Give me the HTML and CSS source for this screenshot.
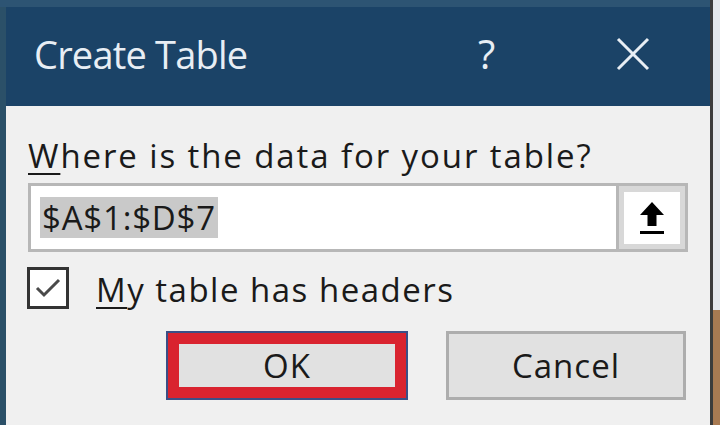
FILE: index.html
```html
<!DOCTYPE html>
<html>
<head>
<meta charset="utf-8">
<link rel="stylesheet" href="styles.css">
</head>
<body>
<div class="screen">
  <div class="edge-left"></div>
  <div class="dialog">
    <div class="top-strip"></div>
    <div class="titlebar">
      <div class="title">Create Table</div>
      <div class="help">?</div>
      <div class="close">
        <svg width="34" height="34" viewBox="0 0 34 34"><path d="M2 2 L32 32 M32 2 L2 32" stroke="#e8eef4" stroke-width="3" fill="none"/></svg>
      </div>
    </div>
    <div class="content">
      <div class="label"><u>W</u>here is the data for your table?</div>
      <div class="range">
        <div class="field"><span class="sel">$A$1:$D$7</span></div>
        <div class="collapse">
          <div class="collapse-inner">
            <svg width="30" height="40" viewBox="0 0 30 40"><path d="M15 4 L27 17 L19.5 17 L19.5 28 L10.5 28 L10.5 17 L3 17 Z" fill="#000"/><rect x="3" y="33" width="24" height="3" fill="#000"/></svg>
          </div>
        </div>
      </div>
      <div class="check-row">
        <div class="checkbox">
          <svg width="36" height="36" viewBox="0 0 36 36"><path d="M7 18 L14 25 L29 10" stroke="#4a4a4a" stroke-width="3" fill="none"/></svg>
        </div>
        <div class="check-label"><u>M</u>y table has headers</div>
      </div>
      <div class="buttons">
        <div class="btn ok"><span>OK</span></div>
        <div class="btn cancel"><span>Cancel</span></div>
      </div>
    </div>
  </div>
  <div class="edge-dark"></div>
  <div class="edge-right">
    <div class="er-top"></div>
    <div class="er-bottom"></div>
  </div>
</div>
</body>
</html>
```
FILE: styles.css
```css
html, body {
  margin: 0;
  padding: 0;
  width: 720px;
  height: 425px;
  overflow: hidden;
  background: #f0f0f0;
  font-family: "Open Sans", "Noto Sans", sans-serif;
}
.screen {
  display: flex;
  width: 720px;
  height: 425px;
}
.edge-left {
  width: 6px;
  background: #2b5068;
}
.dialog {
  flex: 1;
  display: flex;
  flex-direction: column;
  background: #f0f0f0;
}
.top-strip {
  height: 7px;
  background: #2d5473;
  margin-left: -6px;
}
.titlebar {
  height: 99px;
  background: #1b4367;
  display: flex;
  align-items: center;
  color: #e8eef4;
}
.title {
  font-size: 38px;
  padding-left: 28px;
  flex: 1;
  letter-spacing: -0.8px;
  padding-bottom: 6px;
}
.help {
  font-size: 40px;
  width: 30px;
  margin-right: 108px;
  padding-bottom: 6px;
}
.close {
  width: 34px;
  height: 34px;
  margin-right: 60px;
  margin-bottom: 6px;
}
.content {
  flex: 1;
  padding: 28px 0 0 22px;
  color: #1a1a1a;
}
.label {
  font-size: 33px;
  line-height: 44px;
  letter-spacing: 1.9px;
}
.label u, .check-label u {
  text-decoration-thickness: 2px;
  text-underline-offset: 5px;
}
.range {
  display: flex;
  width: 660px;
  height: 69px;
  margin-top: 5px;
  box-sizing: border-box;
  background: #b7b7b7;
  padding: 3px;
}
.field {
  flex: 1;
  background: #fff;
  display: flex;
  align-items: center;
  padding-left: 9px;
}
.sel {
  background: #c9c9c9;
  font-size: 33px;
  line-height: 41px;
  padding: 0 2px;
  letter-spacing: 0.8px;
  color: #1a1a1a;
}
.collapse {
  width: 66px;
  margin-left: 3px;
  background: #d8d8d8;
  padding: 6px 5px 5px 5px;
  box-sizing: border-box;
}
.collapse-inner {
  width: 100%;
  height: 100%;
  background: #fff;
  display: flex;
  align-items: center;
  justify-content: center;
}
.check-row {
  display: flex;
  align-items: center;
  margin-top: 12px;
}
.checkbox {
  width: 42px;
  height: 42px;
  box-sizing: border-box;
  border: 3px solid #333;
  background: #fff;
  display: flex;
  align-items: center;
  justify-content: center;
  margin-left: -1px;
}
.check-label {
  font-size: 33px;
  margin-left: 27px;
  letter-spacing: 1.5px;
  line-height: 44px;
  padding-top: 4px;
}
.buttons {
  display: flex;
  margin-top: 19px;
  margin-left: 138px;
  gap: 38px;
}
.btn {
  width: 242px;
  height: 69px;
  box-sizing: border-box;
  background: #e1e1e1;
  display: flex;
  align-items: center;
  justify-content: center;
  font-size: 33px;
  letter-spacing: 1px;
  color: #1a1a1a;
}
.ok {
  border: 2px solid #3b4f86;
  box-shadow: inset 0 0 0 11px #d9232f;
}
.cancel {
  width: 240px;
  border: 3px solid #adadad;
}
.edge-dark {
  width: 3px;
  background: #3c3c3c;
}
.edge-right {
  width: 7px;
  display: flex;
  flex-direction: column;
}
.er-top {
  height: 310px;
  background: #e4e8ec;
}
.er-bottom {
  flex: 1;
  background: #a87a52;
}
```
